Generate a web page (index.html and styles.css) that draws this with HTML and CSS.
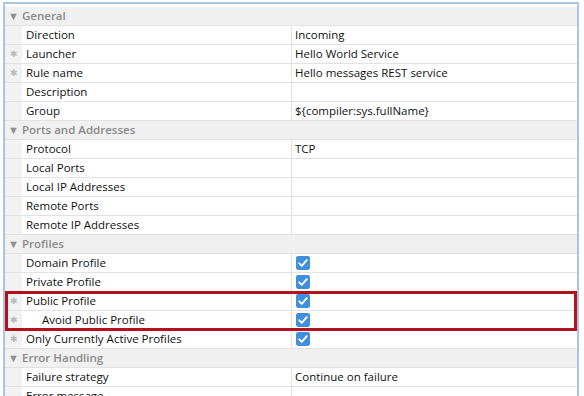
FILE: index.html
```html
<!DOCTYPE html>
<html>
<head>
<meta charset="utf-8">
<link rel="stylesheet" href="styles.css">
</head>
<body>
<div class="frame">
  <div class="cat"><span class="tri">&#9660;</span><span class="cat-name">General</span></div>
  <div class="row"><span class="gut"></span><span class="key">Direction</span><span class="val">Incoming</span></div>
  <div class="row"><span class="gut">&#10033;</span><span class="key">Launcher</span><span class="val">Hello World Service</span></div>
  <div class="row"><span class="gut">&#10033;</span><span class="key">Rule name</span><span class="val">Hello messages REST service</span></div>
  <div class="row"><span class="gut"></span><span class="key">Description</span><span class="val"></span></div>
  <div class="row"><span class="gut"></span><span class="key">Group</span><span class="val">${compiler:sys.fullName}</span></div>

  <div class="cat"><span class="tri">&#9660;</span><span class="cat-name">Ports and Addresses</span></div>
  <div class="row"><span class="gut"></span><span class="key">Protocol</span><span class="val">TCP</span></div>
  <div class="row"><span class="gut"></span><span class="key">Local Ports</span><span class="val"></span></div>
  <div class="row"><span class="gut"></span><span class="key">Local IP Addresses</span><span class="val"></span></div>
  <div class="row"><span class="gut"></span><span class="key">Remote Ports</span><span class="val"></span></div>
  <div class="row"><span class="gut"></span><span class="key">Remote IP Addresses</span><span class="val"></span></div>

  <div class="cat"><span class="tri">&#9660;</span><span class="cat-name">Profiles</span></div>
  <div class="row"><span class="gut"></span><span class="key">Domain Profile</span><span class="val"><svg class="cb" viewBox="0 0 13 13"><rect x="0" y="0" width="13" height="13" rx="2" fill="#3f8fdc"/><path d="M3 6.8 L5.4 9.2 L10 3.8" fill="none" stroke="#fff" stroke-width="1.7" stroke-linecap="round" stroke-linejoin="round"/></svg></span></div>
  <div class="row"><span class="gut"></span><span class="key">Private Profile</span><span class="val"><svg class="cb" viewBox="0 0 13 13"><rect x="0" y="0" width="13" height="13" rx="2" fill="#3f8fdc"/><path d="M3 6.8 L5.4 9.2 L10 3.8" fill="none" stroke="#fff" stroke-width="1.7" stroke-linecap="round" stroke-linejoin="round"/></svg></span></div>
  <div class="hl">
    <div class="row"><span class="gut">&#10033;</span><span class="key">Public Profile</span><span class="val"><svg class="cb" viewBox="0 0 13 13"><rect x="0" y="0" width="13" height="13" rx="2" fill="#3f8fdc"/><path d="M3 6.8 L5.4 9.2 L10 3.8" fill="none" stroke="#fff" stroke-width="1.7" stroke-linecap="round" stroke-linejoin="round"/></svg></span></div>
    <div class="row"><span class="gut">&#10033;</span><span class="key sub">Avoid Public Profile</span><span class="val"><svg class="cb" viewBox="0 0 13 13"><rect x="0" y="0" width="13" height="13" rx="2" fill="#3f8fdc"/><path d="M3 6.8 L5.4 9.2 L10 3.8" fill="none" stroke="#fff" stroke-width="1.7" stroke-linecap="round" stroke-linejoin="round"/></svg></span></div>
  </div>
  <div class="row"><span class="gut">&#10033;</span><span class="key">Only Currently Active Profiles</span><span class="val"><svg class="cb" viewBox="0 0 13 13"><rect x="0" y="0" width="13" height="13" rx="2" fill="#3f8fdc"/><path d="M3 6.8 L5.4 9.2 L10 3.8" fill="none" stroke="#fff" stroke-width="1.7" stroke-linecap="round" stroke-linejoin="round"/></svg></span></div>

  <div class="cat"><span class="tri">&#9660;</span><span class="cat-name">Error Handling</span></div>
  <div class="row"><span class="gut"></span><span class="key">Failure strategy</span><span class="val">Continue on failure</span></div>
  <div class="row"><span class="gut"></span><span class="key">Error message</span><span class="val"></span></div>
</div>
</body>
</html>
```
FILE: styles.css
```css
html, body {
  margin: 0;
  padding: 0;
  background: #fff;
  overflow: hidden;
  height: 396px;
}
body {
  font-family: "Open Sans", "Noto Sans", sans-serif;
  font-size: 11.5px;
  color: #111;
}
.frame {
  margin: 2px 0 0 3px;
  width: 572px;
  border: 2px solid #a8c6e4;
  border-bottom: none;
  padding-top: 3px;
  background: #fff;
}
.cat, .row {
  height: 18px;
  border-bottom: 1px solid #e2e2e2;
  display: flex;
  align-items: center;
  line-height: 18px;
}
.cat {
  background: #f0f0f0;
}
.tri {
  width: 17px;
  font-size: 11px;
  color: #8f8f8f;
  padding-left: 3px;
  box-sizing: border-box;
}
.cat-name {
  font-weight: 600;
  color: #8a8a8a;
}
.gut {
  width: 17px;
  height: 18px;
  background: #f2f2f2;
  color: #b9b9b9;
  font-size: 9px;
  text-align: center;
  flex: none;
}
.key {
  width: 270px;
  padding-left: 4px;
  box-sizing: border-box;
  height: 18px;
  border-right: 1px solid #e2e2e2;
  flex: none;
  white-space: nowrap;
}
.key.sub {
  padding-left: 20px;
}
.val {
  padding-left: 3px;
  display: flex;
  align-items: center;
  height: 18px;
  white-space: nowrap;
}
.cb {
  width: 14px;
  height: 14px;
  margin-left: 1px;
  display: block;
}
.hl {
  position: relative;
}
.hl::after {
  content: "";
  position: absolute;
  left: 0;
  right: 0;
  top: -1px;
  bottom: -1px;
  border: 3px solid #b3111b;
  pointer-events: none;
}
```
